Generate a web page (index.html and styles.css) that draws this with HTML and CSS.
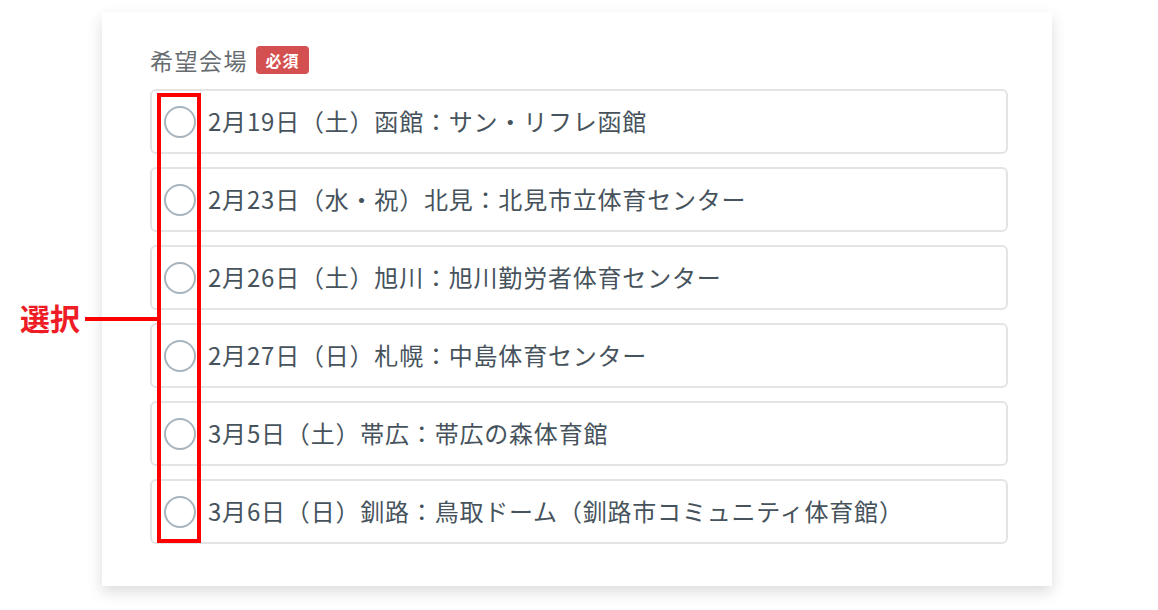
FILE: index.html
```html
<!DOCTYPE html>
<html lang="ja">
<head>
    <meta charset="UTF-8">
    <meta name="viewport" content="width=device-width, initial-scale=1.0">
    <title>希望会場</title>
    <link rel="stylesheet" href="styles.css">
</head>
<body>
    <div class="page">
        <div class="card">
            <div class="field-label">
                <span>希望会場</span>
                <span class="required">必須</span>
            </div>
            <div class="options">
                <label class="option"><span class="radio"></span><span class="option-text">2月19日（土）函館：サン・リフレ函館</span></label>
                <label class="option"><span class="radio"></span><span class="option-text">2月23日（水・祝）北見：北見市立体育センター</span></label>
                <label class="option"><span class="radio"></span><span class="option-text">2月26日（土）旭川：旭川勤労者体育センター</span></label>
                <label class="option"><span class="radio"></span><span class="option-text">2月27日（日）札幌：中島体育センター</span></label>
                <label class="option"><span class="radio"></span><span class="option-text">3月5日（土）帯広：帯広の森体育館</span></label>
                <label class="option"><span class="radio"></span><span class="option-text">3月6日（日）釧路：鳥取ドーム（釧路市コミュニティ体育館）</span></label>
            </div>
        </div>

        <!-- annotation over the radios -->
        <div class="note-box"></div>
        <div class="note-line"></div>
        <div class="note-text">選択</div>
    </div>
</body>
</html>
```

FILE: styles.css
```css
body{
    margin: 0;
    background-color: #fff;
    font-family: "Noto Sans CJK JP", "Noto Sans", sans-serif;
}
.page{
    position: relative;
    width: 1158px;
    height: 610px;
    padding-top: 12px;
    box-sizing: border-box;
}
.card{
    margin-left: 102px;
    width: 950px;
    height: 574px;
    box-sizing: border-box;
    padding: 32px 0 0 48px;
    background-color: #fff;
    box-shadow: 0 6px 14px rgba(0, 0, 0, 0.14);
}
.field-label{
    display: flex;
    align-items: center;
    gap: 8px;
    height: 32px;
    font-size: 23px;
    letter-spacing: 1.5px;
    color: #676c70;
}
.required{
    display: inline-flex;
    align-items: center;
    justify-content: center;
    width: 53px;
    height: 28px;
    border-radius: 4px;
    background-color: #d44f4f;
    color: #fff;
    font-size: 16px;
    font-weight: bold;
    letter-spacing: 1px;
}
.options{
    display: flex;
    flex-direction: column;
    gap: 13px;
    margin-top: 13px;
    width: 858px;
}
.option{
    display: flex;
    align-items: center;
    gap: 12px;
    height: 65px;
    box-sizing: border-box;
    padding-left: 12px;
    border: 2px solid #e4e4e4;
    border-radius: 6px;
}
.radio{
    width: 32px;
    height: 32px;
    box-sizing: border-box;
    border: 2px solid #a7b4bd;
    border-radius: 50%;
    flex-shrink: 0;
}
.option-text{
    padding-bottom: 3px;
    font-size: 24px;
    letter-spacing: 0.8px;
    color: #47535c;
}
.note-box{
    position: absolute;
    left: 157px;
    top: 93px;
    width: 44px;
    height: 450px;
    box-sizing: border-box;
    border: 4px solid #ff0000;
}
.note-line{
    position: absolute;
    left: 85px;
    top: 317px;
    width: 72px;
    height: 4px;
    background-color: #ff0000;
}
.note-text{
    position: absolute;
    left: 20px;
    top: 296px;
    font-size: 30px;
    line-height: 42px;
    font-weight: bold;
    color: #ee1c25;
}
```
